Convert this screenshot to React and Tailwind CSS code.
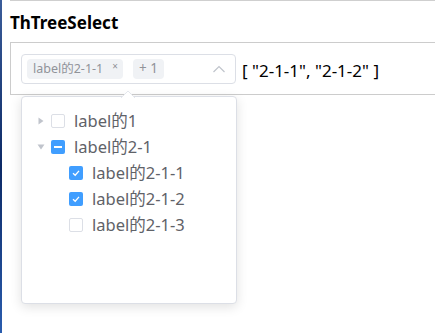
import React from "react";

const font = { fontFamily: '"Noto Sans", "Noto Sans CJK SC", sans-serif' };

function Caret({ open }) {
  return (
    <svg width="6" height="8" viewBox="0 0 6 8" className={open ? "rotate-90" : ""}>
      <path d="M0.5 0.5 L5.5 4 L0.5 7.5 Z" fill="#c0c4cc" />
    </svg>
  );
}

function Checkbox({ state }) {
  if (state === "checked") {
    return (
      <span className="w-[14px] h-[14px] rounded-[2px] bg-[#409eff] flex items-center justify-center shrink-0">
        <svg width="10" height="10" viewBox="0 0 10 10">
          <path d="M2 5.2 L4.2 7.2 L8 2.8" stroke="white" strokeWidth="1.3" fill="none" />
        </svg>
      </span>
    );
  }
  if (state === "half") {
    return (
      <span className="w-[14px] h-[14px] rounded-[2px] bg-[#409eff] flex items-center justify-center shrink-0">
        <span className="w-[8px] h-[2px] bg-white" />
      </span>
    );
  }
  return <span className="w-[14px] h-[14px] rounded-[2px] border border-[#dcdfe6] bg-white shrink-0" />;
}

function Row({ level, caret, state, label }) {
  return (
    <div className="h-[26px] flex items-center" style={{ paddingLeft: 15 + level * 18 }}>
      <span className="w-[14px] flex items-center justify-start pl-[1px]">
        {caret ? <Caret open={caret === "open"} /> : null}
      </span>
      <Checkbox state={state} />
      <span className="ml-[9px] text-[16.5px] text-[#5f6268] leading-none">{label}</span>
    </div>
  );
}

export default function App() {
  return (
    <div className="w-[435px] h-[333px] flex bg-white overflow-hidden" style={font}>
      <div className="w-[2px] h-full bg-gradient-to-b from-[#3b5d9a] via-[#0d2a66] to-[#2a5cae] shrink-0" />
      <div className="flex-1 pl-[8px] relative">
        <div className="border-t border-[#cfcfcf] h-[1px]" />
        <div className="h-[41px] flex items-center text-[17px] font-bold text-black leading-none pt-[1px]">
          ThTreeSelect
        </div>
        <div className="h-[53px] border border-[#cccccc] border-r-0 pl-[10px] pt-[11px]">
          <div className="flex items-start">
            <div className="w-[215px] h-[30px] border border-[#dcdfe6] rounded-[4px] flex items-center pl-[5px] relative">
              <span className="h-[20px] w-[96px] rounded-[4px] bg-[#f0f2f5] flex items-center pl-[6px] text-[12.5px] text-[#909399] leading-none relative">
                label的2-1-1
                <span className="absolute right-[5px] top-[2px] text-[10px] leading-none text-[#909399]">×</span>
              </span>
              <span className="ml-[10px] h-[20px] w-[31px] rounded-[4px] bg-[#f0f2f5] flex items-center justify-center text-[13.5px] text-[#909399] leading-none">
                + 1
              </span>
              <svg className="absolute left-[190px] top-[10px]" width="14" height="8" viewBox="0 0 14 8">
                <path d="M1.5 7 L7 1.5 L12.5 7" stroke="#c0c4cc" strokeWidth="1.2" fill="none" />
              </svg>
            </div>
            <div className="ml-[6px] pt-[8px] text-[17px] text-black leading-none">
              [ "2-1-1", "2-1-2" ]
            </div>
          </div>
        </div>
        <div className="absolute left-[19px] top-[96px] w-[216px] h-[208px] bg-white border border-[#dcdfe6] rounded-[4px] shadow-[0_3px_12px_rgba(0,0,0,0.12)] pt-[11px]">
          <svg className="absolute left-[99px] top-[-7px]" width="14" height="8" viewBox="0 0 14 8">
            <path d="M0 8 L7 1 L14 8 Z" fill="white" />
            <path d="M0 8 L7 1 L14 8" stroke="#e4e7ed" strokeWidth="1" fill="none" />
          </svg>
          <Row level={0} caret="closed" state="none" label="label的1" />
          <Row level={0} caret="open" state="half" label="label的2-1" />
          <Row level={1} state="checked" label="label的2-1-1" />
          <Row level={1} state="checked" label="label的2-1-2" />
          <Row level={1} state="none" label="label的2-1-3" />
        </div>
      </div>
    </div>
  );
}
